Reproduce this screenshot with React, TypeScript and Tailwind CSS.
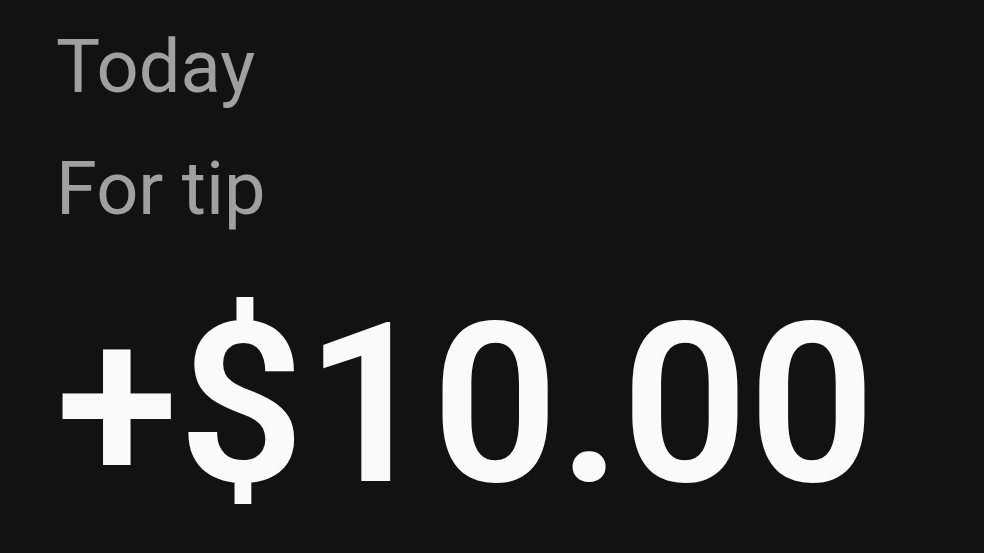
export default function App() {
  return (
    <div className="flex h-[553px] w-[984px] flex-col overflow-hidden bg-[#121212] pl-[56px] pt-[30px] font-['Roboto',sans-serif]">
      <div className="text-[74px] leading-[74px] text-[#a0a0a0]">Today</div>
      <div className="mt-[48px] text-[74px] leading-[74px] text-[#a0a0a0]">For tip</div>
      <div className="mt-[68px] text-[222px] font-semibold leading-[222px] text-[#fafafa]">+$10.00</div>
    </div>
  );
}
